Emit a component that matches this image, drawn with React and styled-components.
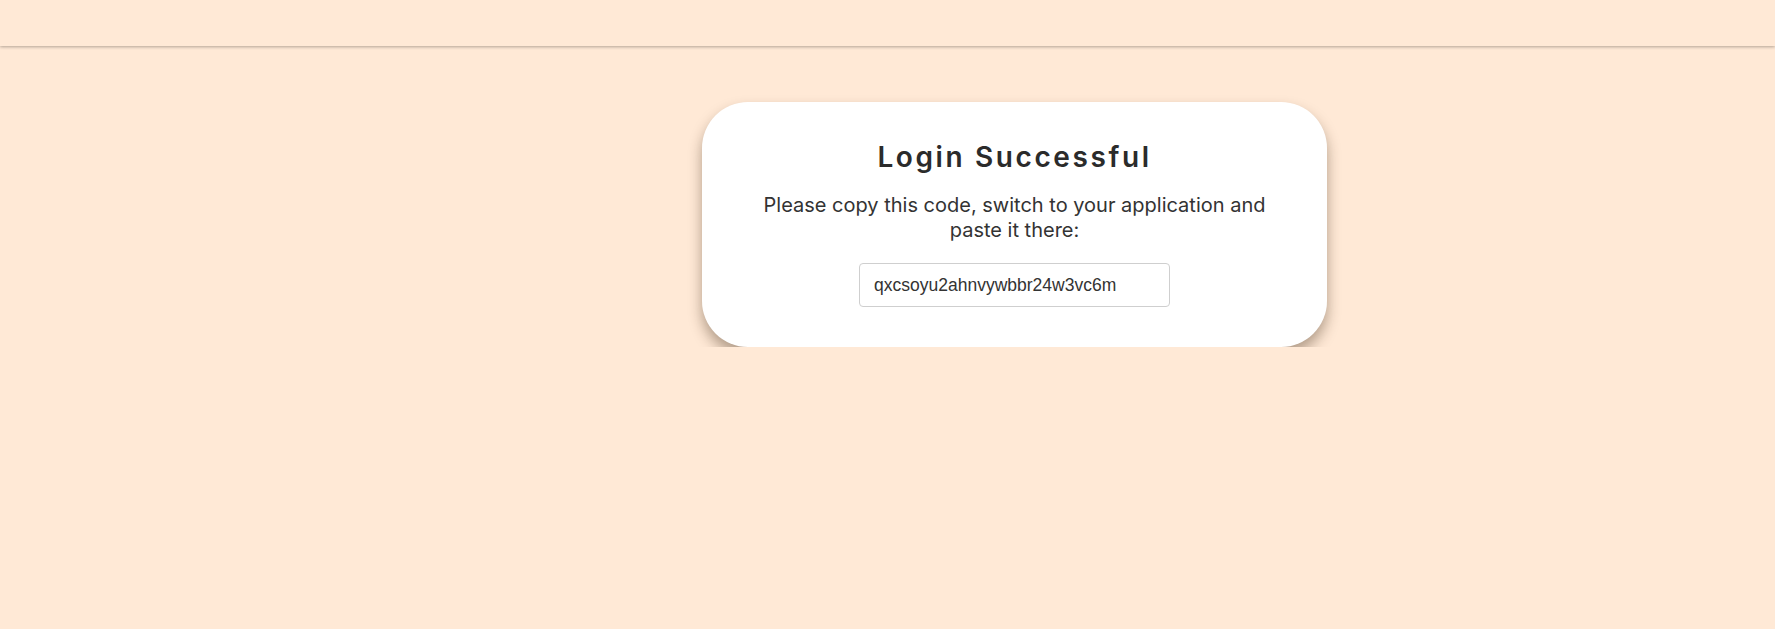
import styled, { createGlobalStyle } from "styled-components";

const Global = createGlobalStyle`
  html, body {
    margin: 0;
    background: #ffe9d6;
    font-family: Inter, "Noto Sans", sans-serif;
    color: #2b2b2b;
  }
`;

const App = () => {
  return (
    <>
      <Global />
      <Header />
      <Layout>
        <Aside />
        <Main>
          <Card>
            <Title>Login Successful</Title>
            <Message>
              Please copy this code, switch to your application and paste it there:
            </Message>
            <CodeInput readOnly value="qxcsoyu2ahnvywbbr24w3vc6m" aria-label="code" />
          </Card>
        </Main>
      </Layout>
    </>
  );
};

const Header = styled.header`
  height: 46px;
  background: #ffe9d6;
  box-shadow: 0 1px 3px rgba(0, 0, 0, 0.3);
  position: relative;
`;

const Layout = styled.div`
  display: flex;
`;

const Aside = styled.aside`
  width: 254px;
  flex-shrink: 0;
`;

const Main = styled.main`
  flex: 1;
  display: flex;
  justify-content: center;
  padding-top: 56px;
`;

const Card = styled.section`
  width: 625px;
  box-sizing: border-box;
  background: #fff;
  border-radius: 46px;
  padding: 38px 40px 40px;
  box-shadow: 0 8px 14px rgba(60, 40, 20, 0.4);
  display: flex;
  flex-direction: column;
  align-items: center;
  text-align: center;
`;

const Title = styled.h1`
  margin: 0;
  font-family: Inter, sans-serif;
  font-size: 28px;
  line-height: 34px;
  font-weight: 600;
  letter-spacing: 2.6px;
  color: #2b2b2b;
`;

const Message = styled.p`
  margin: 19px 0 0;
  max-width: 520px;
  font-size: 20px;
  line-height: 25px;
  color: #333;
`;

const CodeInput = styled.input`
  margin-top: 20px;
  width: 311px;
  height: 44px;
  box-sizing: border-box;
  padding: 0 14px;
  border: 1px solid #cfcfcf;
  border-radius: 4px;
  font-family: "Liberation Sans", Arial, sans-serif;
  font-size: 17.5px;
  color: #333;
  background: #fff;
  outline: none;
`;

export default App;
